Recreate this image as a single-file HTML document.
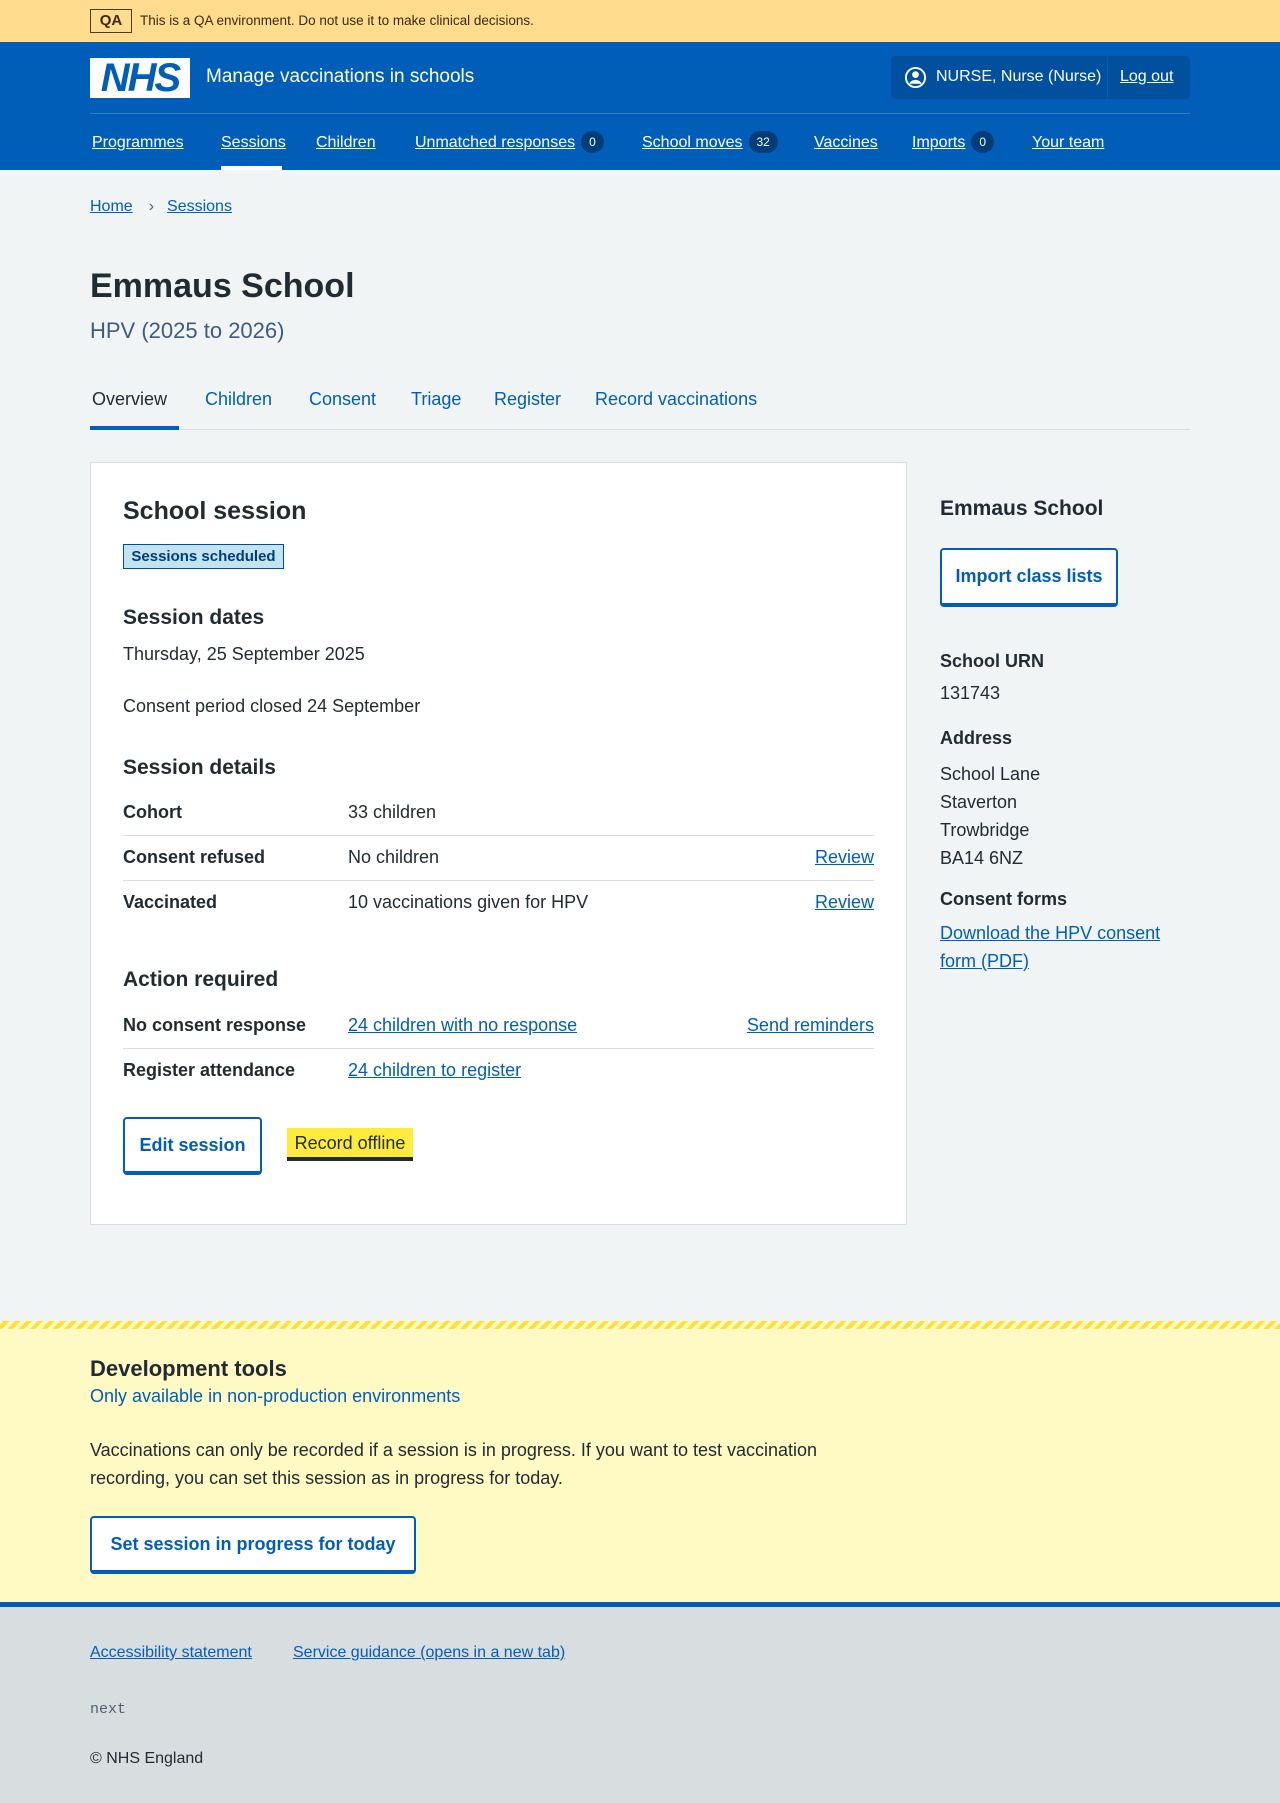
<!DOCTYPE html>
<html><head><meta charset="utf-8"><style>
*{box-sizing:border-box;margin:0;padding:0}
body{width:1280px;height:1803px;position:relative;background:#f0f4f5;font-family:"Liberation Sans",sans-serif;color:#212b32;overflow:hidden}
.a{position:absolute;white-space:nowrap}
a,.lk{color:#005eb8;text-decoration:underline}
.qa{left:0;top:0;width:1280px;height:42px;background:#ffdc8e}
.hdr{left:0;top:42px;width:1280px;height:128px;background:#005eb8}
.nav{color:#fff;font-size:16px;text-decoration:underline;top:134px}
.badge{display:inline-block;background:#003d78;color:#fff;font-size:12px;border-radius:12px;padding:4px 8px;margin-left:6px;text-decoration:none;vertical-align:1px}
.b19{font-size:18px}
.lbl{font-weight:bold;font-size:18px}
.line{position:absolute;height:1px;background:#d8dde0}
.btn{position:absolute;border:2px solid #005eb8;border-bottom:4px solid #005eb8;background:#fff;color:#005eb8;font-weight:bold;font-size:18px;border-radius:4px;display:flex;align-items:center;justify-content:center}
</style></head><body>
<div class="a qa"></div>
<div class="a" style="left:90px;top:9px;width:42px;height:24px;border:1px solid #4d3b16;font-weight:bold;font-size:15px;text-align:center;line-height:22px;color:#3a2a0f">QA</div>
<div class="a" style="left:140px;top:13px;font-size:13.5px;color:#3a2a0f">This is a QA environment. Do not use it to make clinical decisions.</div>
<div class="a hdr"></div>
<div class="a" style="left:90px;top:58px;width:100px;height:40px;background:#fff;color:#005eb8;font-weight:bold;font-style:italic;font-size:40px;line-height:40px;text-align:center;letter-spacing:-2px">NHS</div>
<div class="a" style="left:206px;top:66px;color:#fff;font-size:19px">Manage vaccinations in schools</div>
<div class="a" style="left:891px;top:56px;width:299px;height:43px;background:#00509f;border-radius:4px"></div>
<div class="a" style="left:1107px;top:57px;width:1px;height:41px;background:#005eb8"></div>
<svg class="a" style="left:904px;top:66px" width="23" height="23" viewBox="0 0 24 24"><circle cx="12" cy="12" r="10" fill="none" stroke="#fff" stroke-width="2"/><circle cx="12" cy="9" r="3.5" fill="#fff"/><path d="M5.5 18.5c1.5-3 4-4 6.5-4s5 1 6.5 4" fill="#fff"/></svg>
<div class="a" style="left:936px;top:68px;color:#fff;font-size:16px">NURSE, Nurse (Nurse)</div>
<div class="a" style="left:1120px;top:68px;color:#fff;font-size:16px;text-decoration:underline">Log out</div>
<div class="a" style="left:90px;top:113px;width:1100px;height:1px;background:#3a7cc3"></div>
<div class="a nav" style="left:92px">Programmes</div>
<div class="a nav" style="left:221px">Sessions</div>
<div class="a" style="left:221px;top:166px;width:61px;height:4px;background:#fff"></div>
<div class="a nav" style="left:316px">Children</div>
<div class="a nav" style="left:415px;top:131px"><u>Unmatched responses</u><span class="badge">0</span></div>
<div class="a nav" style="left:642px;top:131px"><u>School moves</u><span class="badge">32</span></div>
<div class="a nav" style="left:814px">Vaccines</div>
<div class="a nav" style="left:912px;top:131px"><u>Imports</u><span class="badge">0</span></div>
<div class="a nav" style="left:1032px">Your team</div>

<div class="a" style="left:90px;top:198px;font-size:16px"><a>Home</a><span style="color:#4c6272;margin:0 13px 0 16px">›</span><a>Sessions</a></div>
<div class="a" style="left:90px;top:267px;font-size:34px;font-weight:bold">Emmaus School</div>
<div class="a" style="left:90px;top:318px;font-size:22px;color:#425b76">HPV (2025 to 2026)</div>

<div class="a" style="left:90px;top:429px;width:1100px;height:1px;background:#d8dde0"></div>
<div class="a" style="left:90px;top:426px;width:89px;height:4px;background:#005eb8"></div>
<div class="a b19" style="left:92px;top:389px">Overview</div>
<div class="a b19" style="left:205px;top:389px;color:#005eb8">Children</div>
<div class="a b19" style="left:309px;top:389px;color:#005eb8">Consent</div>
<div class="a b19" style="left:411px;top:389px;color:#005eb8">Triage</div>
<div class="a b19" style="left:494px;top:389px;color:#005eb8">Register</div>
<div class="a b19" style="left:595px;top:389px;color:#005eb8">Record vaccinations</div>

<div class="a" style="left:90px;top:462px;width:817px;height:763px;background:#fff;border:1px solid #d8dde0"></div>
<div class="a" style="left:123px;top:497px;font-size:25px;font-weight:bold">School session</div>
<div class="a" style="left:123px;top:544px;width:161px;height:25px;background:#c3e3f0;border:1px solid #004b9b;color:#003d78;font-weight:bold;font-size:15px;line-height:23px;text-align:center">Sessions scheduled</div>
<div class="a" style="left:123px;top:606px;font-size:21px;font-weight:bold">Session dates</div>
<div class="a b19" style="left:123px;top:644px">Thursday, 25 September 2025</div>
<div class="a b19" style="left:123px;top:696px">Consent period closed 24 September</div>
<div class="a" style="left:123px;top:756px;font-size:21px;font-weight:bold">Session details</div>
<div class="a lbl" style="left:123px;top:802px">Cohort</div><div class="a b19" style="left:348px;top:802px">33 children</div>
<div class="line" style="left:123px;top:835px;width:751px"></div>
<div class="a lbl" style="left:123px;top:847px">Consent refused</div><div class="a b19" style="left:348px;top:847px">No children</div><div class="a b19 lk" style="right:406px;top:847px">Review</div>
<div class="line" style="left:123px;top:880px;width:751px"></div>
<div class="a lbl" style="left:123px;top:892px">Vaccinated</div><div class="a b19" style="left:348px;top:892px">10 vaccinations given for HPV</div><div class="a b19 lk" style="right:406px;top:892px">Review</div>
<div class="a" style="left:123px;top:968px;font-size:21px;font-weight:bold">Action required</div>
<div class="a lbl" style="left:123px;top:1015px">No consent response</div><div class="a b19 lk" style="left:348px;top:1015px">24 children with no response</div><div class="a b19 lk" style="right:406px;top:1015px">Send reminders</div>
<div class="line" style="left:123px;top:1048px;width:751px"></div>
<div class="a lbl" style="left:123px;top:1060px">Register attendance</div><div class="a b19 lk" style="left:348px;top:1060px">24 children to register</div>
<div class="btn" style="left:123px;top:1117px;width:139px;height:58px">Edit session</div>
<div class="a" style="left:287px;top:1128px;width:126px;height:33px;background:#ffeb3b;border-bottom:4px solid #212b32;font-size:18px;line-height:30px;text-align:center">Record offline</div>

<div class="a" style="left:940px;top:497px;font-size:21px;font-weight:bold">Emmaus School</div>
<div class="btn" style="left:940px;top:548px;width:178px;height:59px">Import class lists</div>
<div class="a lbl" style="left:940px;top:651px">School URN</div>
<div class="a b19" style="left:940px;top:683px">131743</div>
<div class="a lbl" style="left:940px;top:728px">Address</div>
<div class="a b19" style="left:940px;top:760px;line-height:28px">School Lane<br>Staverton<br>Trowbridge<br>BA14 6NZ</div>
<div class="a lbl" style="left:940px;top:889px">Consent forms</div>
<div class="a b19 lk" style="left:940px;top:919px;line-height:28px">Download the HPV consent<br>form (PDF)</div>

<div class="a" style="left:0;top:1321px;width:1280px;height:286px;background:#fff9c4"></div>
<div class="a" style="left:0;top:1321px;width:1280px;height:8px;background:repeating-linear-gradient(-45deg,#ffe033 0 4px,#fff9c4 4px 8px)"></div>
<div class="a" style="left:90px;top:1356px;font-size:22px;font-weight:bold">Development tools</div>
<div class="a b19" style="left:90px;top:1386px;color:#005eb8">Only available in non-production environments</div>
<div class="a b19" style="left:90px;top:1436px;line-height:28px">Vaccinations can only be recorded if a session is in progress. If you want to test vaccination<br>recording, you can set this session as in progress for today.</div>
<div class="btn" style="left:90px;top:1516px;width:326px;height:58px">Set session in progress for today</div>
<div class="a" style="left:0;top:1602px;width:1280px;height:5px;background:#005eb8"></div>
<div class="a" style="left:0;top:1607px;width:1280px;height:196px;background:#d8dde0"></div>
<div class="a lk" style="left:90px;top:1644px;font-size:16px">Accessibility statement</div>
<div class="a lk" style="left:293px;top:1644px;font-size:16px">Service guidance (opens in a new tab)</div>
<div class="a" style="left:90px;top:1701px;font-size:15px;font-family:'Liberation Mono',monospace;color:#4c6272">next</div>
<div class="a" style="left:90px;top:1750px;font-size:16px">© NHS England</div>
</body></html>
